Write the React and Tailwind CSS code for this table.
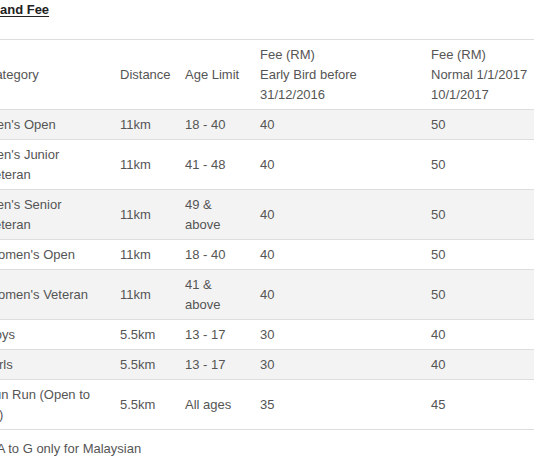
const ROWS = [
  { category: "Men's Open", distance: "11km", age: "18 - 40", early: "40", normal: "50" },
  { category: "Men's Junior Veteran", distance: "11km", age: "41 - 48", early: "40", normal: "50" },
  { category: "Men's Senior Veteran", distance: "11km", age: "49 & above", early: "40", normal: "50" },
  { category: "Women's Open", distance: "11km", age: "18 - 40", early: "40", normal: "50" },
  { category: "Women's Veteran", distance: "11km", age: "41 & above", early: "40", normal: "50" },
  { category: "Boys", distance: "5.5km", age: "13 - 17", early: "30", normal: "40" },
  { category: "Girls", distance: "5.5km", age: "13 - 17", early: "30", normal: "40" },
  { category: "Fun Run (Open to all)", distance: "5.5km", age: "All ages", early: "35", normal: "45" },
];

const cell = "pl-2 pr-1 pt-[5px] pb-[4px] align-middle text-left font-normal";
// first and last columns wrap sooner
const wide = "pl-2 pr-[20px] pt-[5px] pb-[4px] align-middle text-left font-normal";
const last = "pl-2 pr-[24px] pt-[5px] pb-[4px] align-middle text-left font-normal";

export default function App() {
  return (
    <div
      className="h-[462px] w-[534px] overflow-hidden bg-white text-[13px] leading-5 text-[#555]"
      style={{ fontFamily: '"Liberation Sans", Arial, sans-serif' }}
    >
      {/* Section title, scrolled off to the left */}
      <h3 className="-ml-[60px] h-5 whitespace-nowrap text-[13px] font-bold leading-5 text-[#222]">
        Category <span className="underline underline-offset-2">and Fee</span>
      </h3>

      <div className="-ml-[22px] mt-[19px] w-[616px]">
        <table className="w-full table-fixed border-collapse">
          <colgroup>
            <col className="w-[134px]" />
            <col className="w-[65px]" />
            <col className="w-[75px]" />
            <col className="w-[171px]" />
            <col className="w-[171px]" />
          </colgroup>
          <thead>
            <tr className="border-y border-[#ddd]">
              <th className={wide}>Category</th>
              <th className={cell}>Distance</th>
              <th className={cell}>Age Limit</th>
              <th className={cell}>
                Fee (RM)
                <br />
                Early Bird before 31/12/2016
              </th>
              <th className={last}>
                Fee (RM)
                <br />
                Normal 1/1/2017 10/1/2017
              </th>
            </tr>
          </thead>
          <tbody>
            {ROWS.map((r, i) => (
              <tr
                key={r.category}
                className={`border-b border-[#ddd] ${i % 2 === 0 ? "bg-[#f3f3f3]" : "bg-white"}`}
              >
                <td className={wide}>{r.category}</td>
                <td className={cell}>{r.distance}</td>
                <td className={cell}>{r.age}</td>
                <td className={cell}>{r.early}</td>
                <td className={last}>{r.normal}</td>
              </tr>
            ))}
          </tbody>
        </table>
      </div>

      <p className="-ml-[59px] mt-[9px] whitespace-nowrap">Category A to G only for Malaysian</p>
    </div>
  );
}
